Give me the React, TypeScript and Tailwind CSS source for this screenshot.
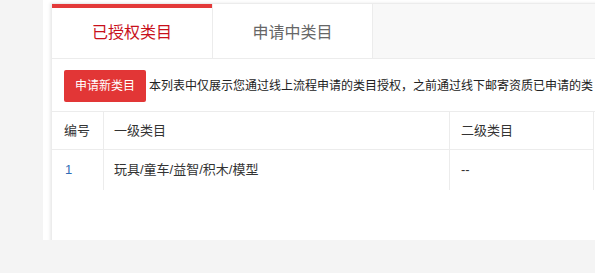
import React from 'react';

const rows = [{ id: 1, first: '玩具/童车/益智/积木/模型', second: '--' }];

export default function App() {
  return (
    <div
      className="w-[595px] h-[273px] overflow-hidden bg-[#f4f4f4]"
      style={{ fontFamily: '"Liberation Sans", "Noto Sans CJK SC", sans-serif' }}
    >
      <div className="ml-[43px] h-[240px] overflow-hidden bg-white pl-[9px] pt-[3px]">
        <div className="h-[260px] w-[560px] shadow-[-2px_0_3px_rgba(0,0,0,0.09)]">
          {/* tabs */}
          <div className="flex h-[56px] border-t border-b border-[#ececec] bg-[#f8f8f8]">
            <div className="flex w-[160px] flex-col bg-white">
              <div className="h-[4px] bg-[#e33a3a]" />
              <div className="flex flex-1 items-center justify-center text-[16px] text-[#c8101b]">
                已授权类目
              </div>
            </div>
            <div className="flex w-[161px] items-center justify-center border-l border-r border-[#ececec] bg-white pt-[4px] text-[16px] text-[#666]">
              申请中类目
            </div>
          </div>

          {/* toolbar */}
          <div className="flex h-[53px] items-center overflow-hidden whitespace-nowrap border-b border-[#ececec] pl-[12px] pt-[1px]">
            <button className="h-[32px] rounded-[2px] bg-[#e23636] px-[11px] text-[12px] text-white">
              申请新类目
            </button>
            <span className="ml-[3px] text-[12px] text-[#222]">
              本列表中仅展示您通过线上流程申请的类目授权，之前通过线下邮寄资质已申请的类
            </span>
          </div>

          {/* table */}
          <div className="w-[542px] border-r border-[#ececec] text-[13px] text-[#333]">
            <div className="flex h-[38px] items-center border-b border-[#ececec]">
              <div className="flex h-full w-[51px] items-center pl-[12px]">编号</div>
              <div className="flex h-full w-[346px] items-center border-l border-[#ececec] pl-[10px]">一级类目</div>
              <div className="flex h-full flex-1 items-center border-l border-[#ececec] pl-[11px]">二级类目</div>
            </div>
            {rows.map((r) => (
              <div key={r.id} className="flex h-[40px] items-center">
                <div className="flex h-full w-[51px] items-center pl-[13px] text-[#2f6db5]">{r.id}</div>
                <div className="flex h-full w-[346px] items-center border-l border-[#ececec] pl-[10px]">{r.first}</div>
                <div className="flex h-full flex-1 items-center border-l border-[#ececec] pl-[11px]">{r.second}</div>
              </div>
            ))}
          </div>
        </div>
      </div>
    </div>
  );
}
